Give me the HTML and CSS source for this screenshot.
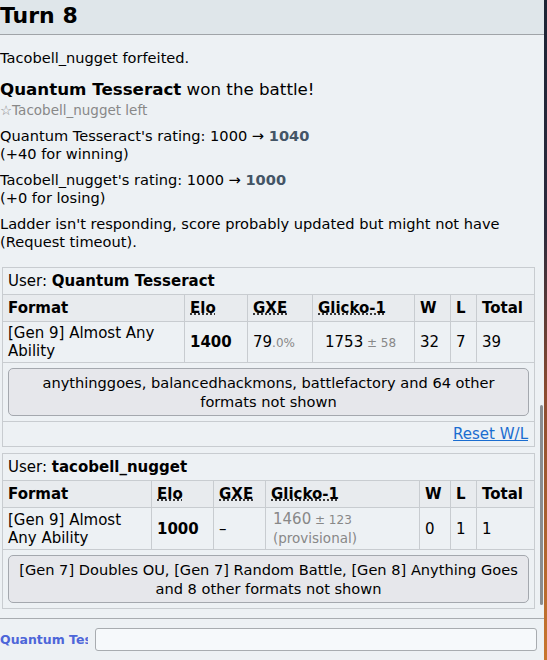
FILE: index.html
```html
<!DOCTYPE html>
<html>
  <head>
    <meta charset="UTF-8">
    <title>Battle log</title>
    <link rel="stylesheet" href="styles.css">
  </head>
  <body>
    <div class="frame">
      <div class="panel">
        <div class="log-area">
          <h2 class="turn">Turn 8</h2>
          <div class="log">
            <p class="line">Tacobell_nugget forfeited.</p>
            <p class="win"><strong>Quantum Tesseract</strong> won the battle!</p>
            <p class="notice">&#9734;Tacobell_nugget left</p>
            <p class="line rating">Quantum Tesseract's rating: 1000 &rarr; <strong>1040</strong><br>(+40 for winning)</p>
            <p class="line rating">Tacobell_nugget's rating: 1000 &rarr; <strong>1000</strong><br>(+0 for losing)</p>
            <p class="line ladder">Ladder isn't responding, score probably updated but might not have<br>(Request timeout).</p>

            <table class="ladder-table first">
              <colgroup>
                <col style="width:182px"><col style="width:63px"><col style="width:65px"><col style="width:102px"><col style="width:36px"><col style="width:26px"><col>
              </colgroup>
              <tr><td colspan="7" class="user">User: <strong>Quantum Tesseract</strong></td></tr>
              <tr class="head">
                <th>Format</th>
                <th><abbr>Elo</abbr></th>
                <th><abbr>GXE</abbr></th>
                <th><abbr>Glicko-1</abbr></th>
                <th>W</th>
                <th>L</th>
                <th>Total</th>
              </tr>
              <tr class="data">
                <td>[Gen 9] Almost Any Ability</td>
                <td class="elo">1400</td>
                <td>79<small>.0%</small></td>
                <td class="glicko centered">1753<small> &plusmn; 58</small></td>
                <td>32</td>
                <td>7</td>
                <td>39</td>
              </tr>
              <tr><td colspan="7" class="more"><button class="more-btn">anythinggoes, balancedhackmons, battlefactory and 64 other formats not shown</button></td></tr>
              <tr><td colspan="7" class="reset"><a href="#">Reset W/L</a></td></tr>
            </table>

            <table class="ladder-table second">
              <colgroup>
                <col style="width:149px"><col style="width:62px"><col style="width:52px"><col style="width:154px"><col style="width:31px"><col style="width:26px"><col>
              </colgroup>
              <tr><td colspan="7" class="user">User: <strong>tacobell_nugget</strong></td></tr>
              <tr class="head">
                <th>Format</th>
                <th><abbr>Elo</abbr></th>
                <th><abbr>GXE</abbr></th>
                <th><abbr>Glicko-1</abbr></th>
                <th>W</th>
                <th>L</th>
                <th>Total</th>
              </tr>
              <tr class="data">
                <td>[Gen 9] Almost Any Ability</td>
                <td class="elo">1000</td>
                <td>&ndash;</td>
                <td class="glicko faded">1460<small> &plusmn; 123</small><br><span class="prov">(provisional)</span></td>
                <td>0</td>
                <td>1</td>
                <td>1</td>
              </tr>
              <tr><td colspan="7" class="more"><button class="more-btn">[Gen 7] Doubles OU, [Gen 7] Random Battle, [Gen 8] Anything Goes and 8 other formats not shown</button></td></tr>
            </table>
          </div>
          <div class="thumb"></div>
        </div>
        <div class="chat-bar">
          <span class="chat-name">Quantum Tesseract</span>
          <input class="chat-input" type="text">
        </div>
      </div>
      <div class="edge"></div>
    </div>
  </body>
</html>
```

FILE: styles.css
```css
body {
  margin: 0;
  padding: 0;
  font-family: "DejaVu Sans", Verdana, sans-serif;
  font-size: 14.6px;
  color: #000;
  background: #edf1f4;
}
.frame {
  display: flex;
  height: 660px;
  overflow: hidden;
}
.panel {
  flex: 1;
  display: flex;
  flex-direction: column;
  min-width: 0;
}
.edge {
  width: 3px;
  background: linear-gradient(#1c2434 0%, #2c2a3c 35%, #8c4c30 60%, #c8762e 100%);
}
.log-area {
  position: relative;
  flex: 1;
  overflow: hidden;
}
.turn {
  margin: 0;
  height: 34px;
  line-height: 32px;
  padding: 0;
  font-size: 22px;
  font-weight: bold;
  background: #dfe6ea;
  border-bottom: 1px solid #a0a4a8;
}
.log {
  padding: 14px 7px 0 0;
}
.log p {
  margin: 0;
}
.line {
  line-height: 18px;
}
.win {
  font-size: 16.7px;
  line-height: 22px;
  margin-top: 11px !important;
}
.notice {
  color: #888;
  font-size: 13.5px;
  line-height: 18px;
  margin-top: 1px !important;
}
.rating {
  margin-top: 8px !important;
}
.rating strong {
  color: #456;
}
.ladder {
  margin-top: 8px !important;
}
.ladder-table {
  border-collapse: collapse;
  margin-left: 2px;
  width: 533px;
  table-layout: fixed;
  font-size: 15px;
}
.ladder-table.first {
  margin-top: 16px;
}
.ladder-table.second {
  margin-top: 6px;
}
.ladder-table td,
.ladder-table th {
  border: 1px solid #c8ccd0;
  padding: 3px 5px;
  text-align: left;
  line-height: 18px;
}
.ladder-table th {
  background: #e8ebee;
  font-weight: bold;
  height: 20px;
}
.ladder-table .user {
  height: 20px;
}
.ladder-table abbr {
  text-decoration: underline dotted;
}
.data td {
  height: 33px;
  padding: 2px 5px;
}
.elo {
  font-weight: bold;
}
.ladder-table small {
  font-size: 12px;
  color: #888;
}
.ladder-table .centered {
  padding-left: 12px;
}
.faded {
  color: #888;
}
.glicko.faded {
  padding-left: 7px;
}
.prov {
  font-size: 13.5px;
}
.more {
  padding: 5px 5px !important;
}
.more-btn {
  display: block;
  width: 100%;
  font-family: inherit;
  font-size: 14.6px;
  line-height: 19px;
  padding: 4px 8px;
  background: #e6e7eb;
  border: 1px solid #a4a8ae;
  border-radius: 5px;
  color: #000;
}
.reset {
  text-align: right !important;
  padding: 3px 6px !important;
}
.reset a {
  color: #1a6dd0;
}
.thumb {
  position: absolute;
  right: 1px;
  top: 405px;
  width: 3px;
  height: 200px;
  background: #8a8d90;
  border-radius: 2px;
}
.chat-bar {
  display: flex;
  align-items: center;
  gap: 7px;
  height: 41px;
  border-top: 1px solid #a8acb0;
  padding: 0 7px 0 0;
}
.chat-name {
  width: 88px;
  overflow: hidden;
  white-space: nowrap;
  color: #4d66d9;
  font-weight: bold;
  font-size: 12.5px;
}
.chat-input {
  flex: 1;
  height: 21px;
  border: 1px solid #a8acb0;
  border-radius: 3px;
  background: #f6f9fb;
  padding: 0 4px;
}
```
